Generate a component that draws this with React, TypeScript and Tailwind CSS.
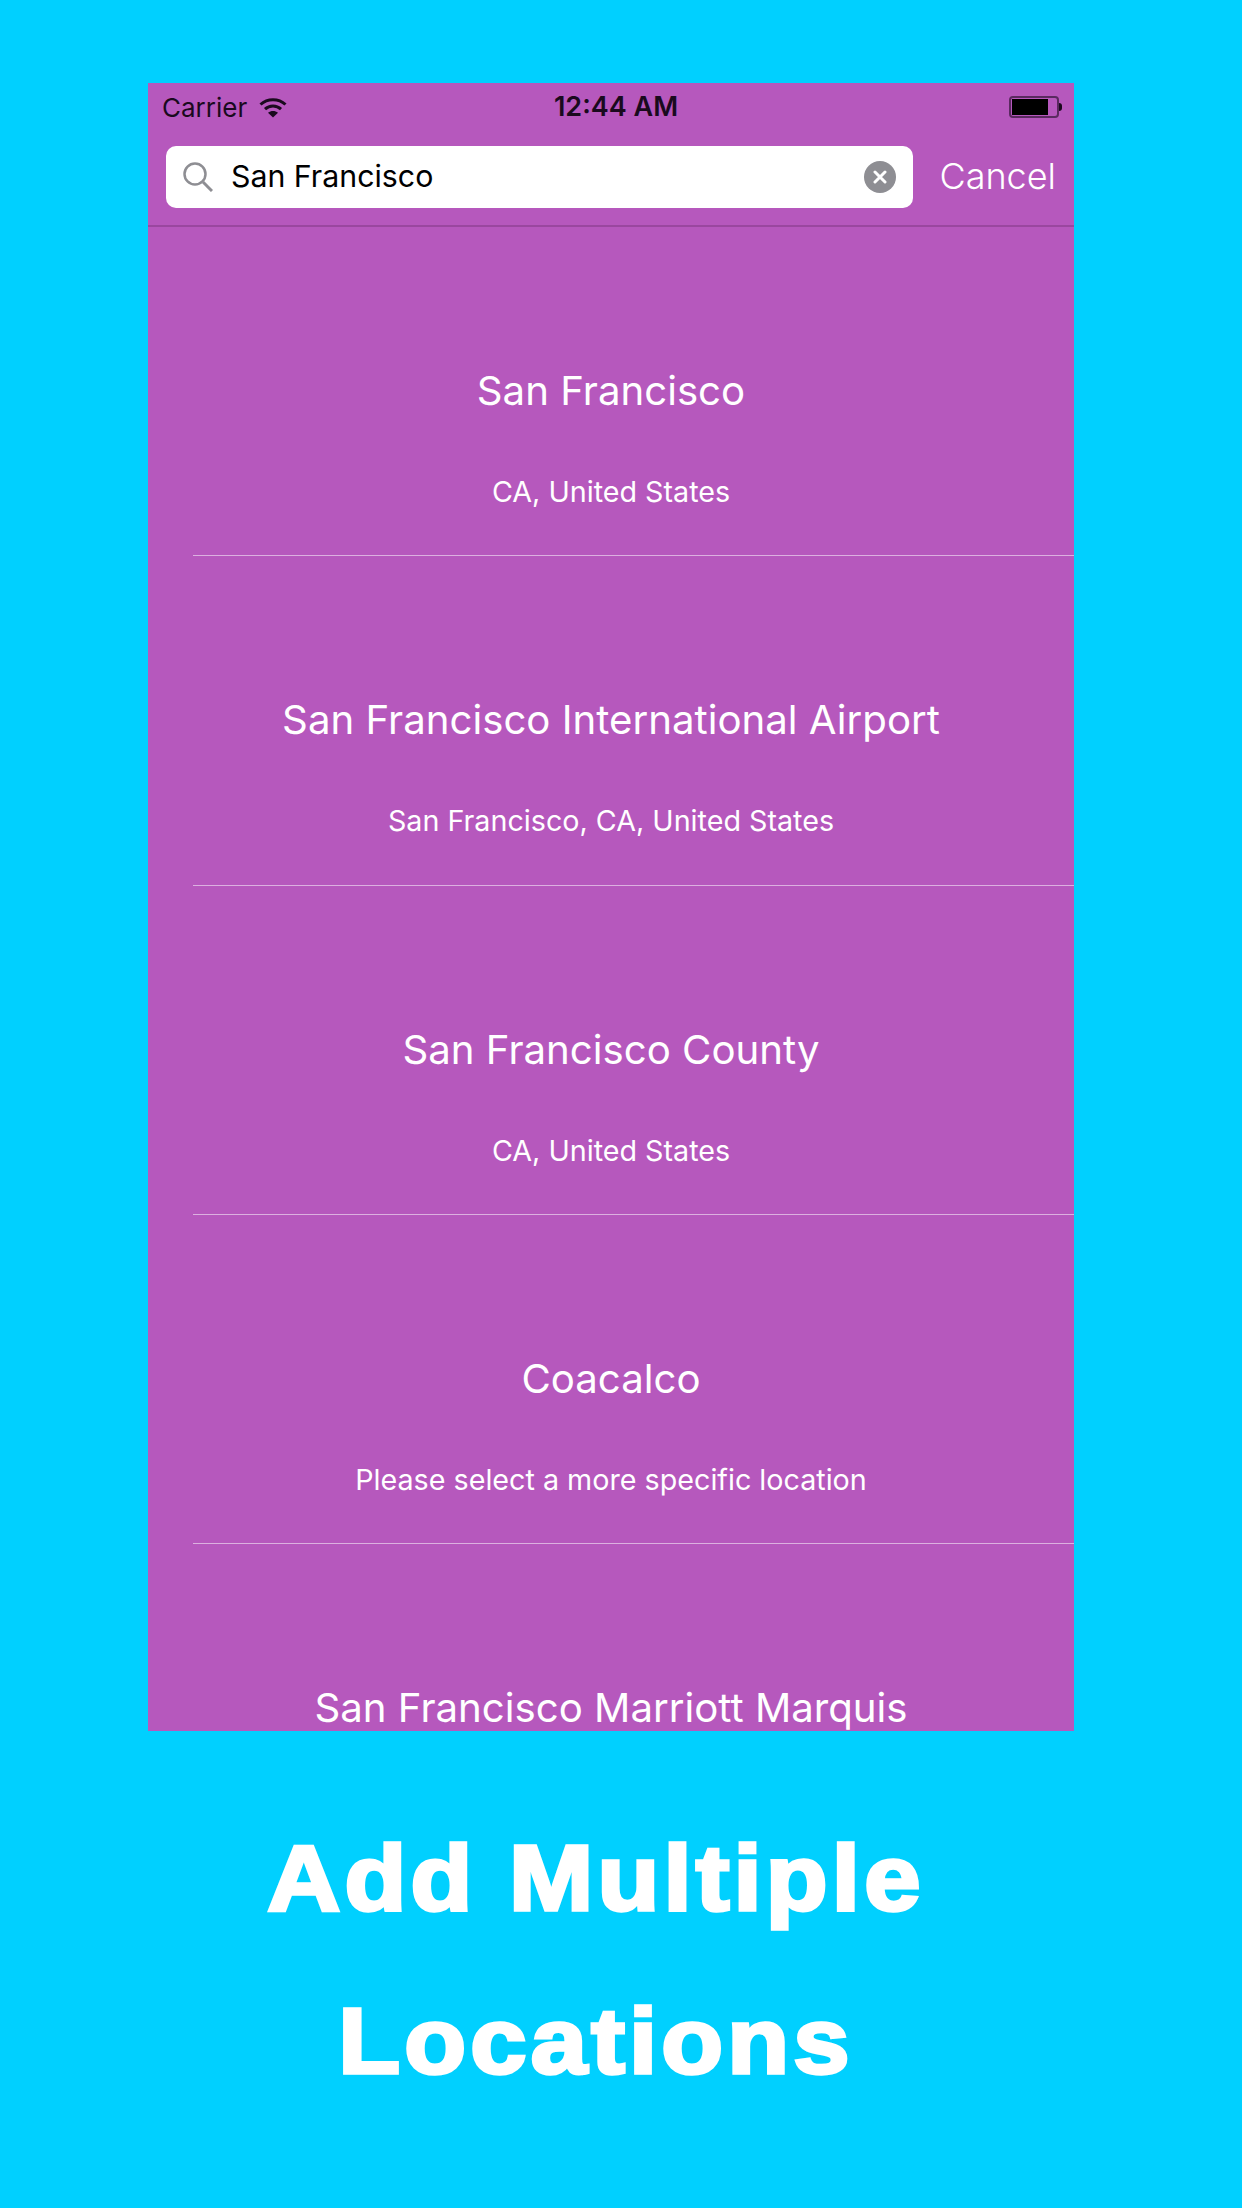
const locations = [
  { name: "San Francisco", detail: "CA, United States" },
  { name: "San Francisco International Airport", detail: "San Francisco, CA, United States" },
  { name: "San Francisco County", detail: "CA, United States" },
  { name: "Coacalco", detail: "Please select a more specific location" },
];

function Wifi() {
  return (
    <svg width="28" height="21" viewBox="0 0 28 21" fill="none" stroke="#1a0a1e" strokeWidth="3">
      <path d="M1.5 7.5C8.5 1 19.5 1 26.5 7.5" />
      <path d="M6 12.2C10.5 8 17.5 8 22 12.2" />
      <path d="M14 20.5L9 15.8C12 13.4 16 13.4 19 15.8Z" fill="#1a0a1e" stroke="none" />
    </svg>
  );
}

function Battery() {
  return (
    <div className="flex items-center">
      <div className="flex h-[22px] w-[50px] rounded-[4px] border-2 border-[#5a2a60] p-[1px]">
        <div className="h-full w-[36px] bg-black" />
      </div>
      <div className="h-[8px] w-[3px] rounded-r-full bg-[#1a0a1e]" />
    </div>
  );
}

export default function App() {
  return (
    <div className="h-[2208px] w-[1242px] overflow-hidden bg-[#00d0ff] pt-[83px] font-['Inter',sans-serif]">
      {/* Phone */}
      <div className="ml-[148px] h-[1648px] w-[926px] overflow-hidden bg-[#b658bd] text-white">
        {/* Status bar */}
        <div className="flex h-[63px] items-center justify-between pb-[15px] pl-[14px] pr-[12px] text-[#1a0a1e]">
          <div className="flex w-[308px] items-center gap-[12px] text-[26px]">
            <span>Carrier</span>
            <Wifi />
          </div>
          <span className="text-[27px] font-semibold">12:44 AM</span>
          <div className="flex w-[300px] justify-end">
            <Battery />
          </div>
        </div>

        {/* Search */}
        <div className="flex h-[81px] items-start border-b-2 border-[#9a479f] pl-[18px] pr-[18px]">
          <div className="flex h-[62px] w-[749px] items-center rounded-[10px] bg-white pl-[17px] pr-[17px]">
            <svg width="30" height="30" viewBox="0 0 30 30" fill="none" stroke="#8e8e93" strokeWidth="2.5">
              <circle cx="12" cy="12" r="10.5" />
              <path d="M20 20L29 29" strokeWidth="3" />
            </svg>
            <span className="ml-[18px] flex-1 text-[30.3px] text-black">San Francisco</span>
            <div className="flex h-[32px] w-[32px] items-center justify-center rounded-full bg-[#8e8e93]">
              <svg width="14" height="14" viewBox="0 0 14 14" stroke="white" strokeWidth="3" strokeLinecap="round">
                <path d="M2 2L12 12M12 2L2 12" />
              </svg>
            </div>
          </div>
          <span className="ml-[26px] mt-[8px] text-[36px] font-light leading-[44px]">Cancel</span>
        </div>

        {/* Results */}
        {locations.map((loc) => (
          <div key={loc.name} className="relative h-[329.3px] text-center">
            <div className="pt-[138px] text-[40.2px] leading-[52px]">{loc.name}</div>
            <div className="mt-[55px] text-[28.7px] leading-[40px]">{loc.detail}</div>
            <div className="absolute bottom-0 left-[45px] right-0 h-px bg-[#dcb0e0]" />
          </div>
        ))}
        <div className="pt-[138px] text-center text-[40.2px] leading-[52px]">San Francisco Marriott Marquis</div>
      </div>

      {/* Caption */}
      <div className="ml-[-50px] mt-[66px] origin-center scale-x-[1.1] text-center font-['Liberation_Sans',sans-serif] text-[92px] font-bold leading-[163px] tracking-[3.8px] text-white [-webkit-text-stroke:3.5px_white]">
        <div>Add Multiple</div>
        <div>Locations</div>
      </div>
    </div>
  );
}
